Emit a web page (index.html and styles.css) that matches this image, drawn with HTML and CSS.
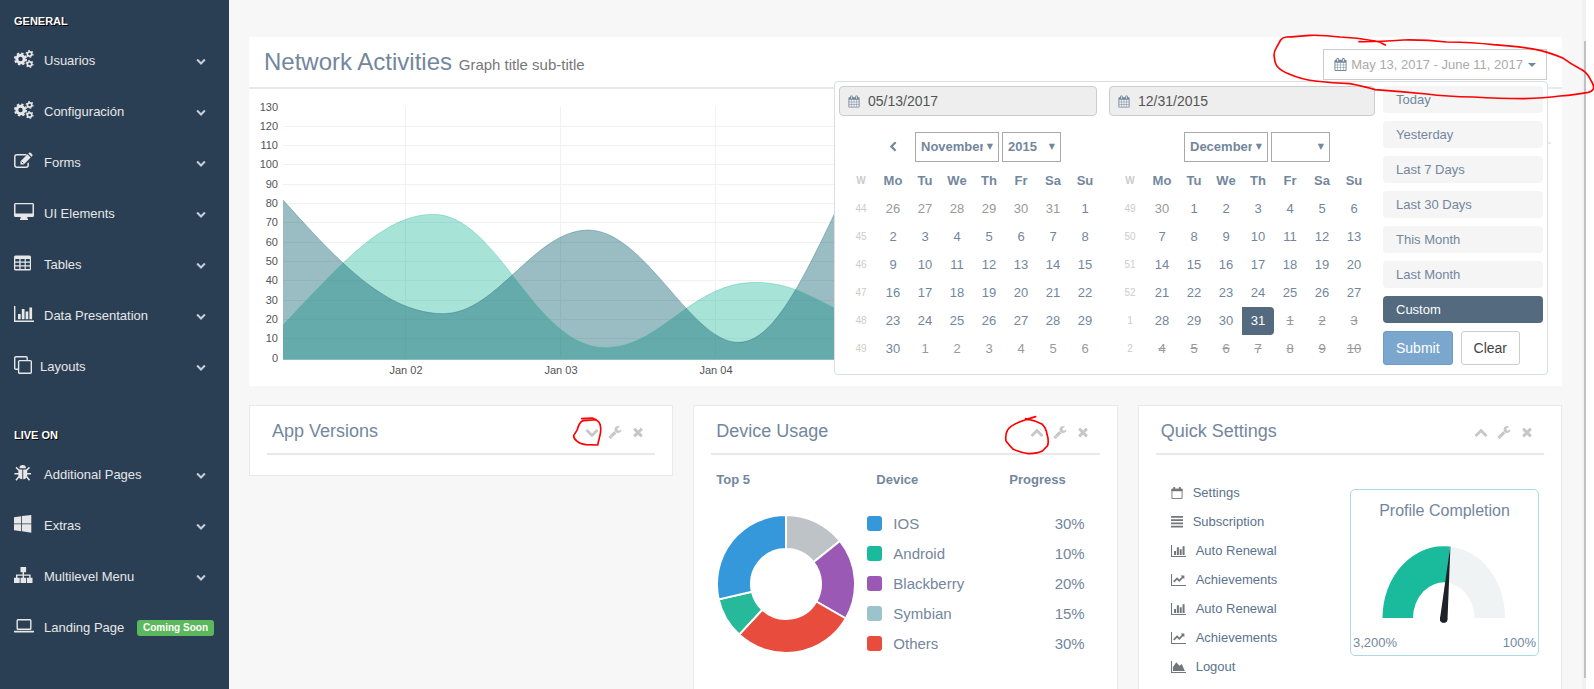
FILE: index.html
```
<!DOCTYPE html>
<html lang="en">
<head>
<meta charset="utf-8">
<title>Network Activities</title>
<link rel="stylesheet" href="styles.css">
</head>
<body>
<svg class="sprite" aria-hidden="true">
  <symbol id="i-down" viewBox="0 0 1792 1792"><path d="M1683 808l-742 741q-19 19-45 19t-45-19l-742-741q-19-19-19-45.500t19-45.500l166-165q19-19 45-19t45 19l531 531 531-531q19-19 45-19t45 19l166 165q19 19 19 45.500t-19 45.500z"/></symbol>
  <symbol id="i-up" viewBox="0 0 1792 1792"><path d="M1683 1331l-166 165q-19 19-45 19t-45-19l-531-531-531 531q-19 19-45 19t-45-19l-166-165q-19-19-19-45.500t19-45.500l742-741q19-19 45-19t45 19l742 741q19 19 19 45.500t-19 45.500z"/></symbol>
  <symbol id="i-left" viewBox="0 0 1792 1792"><path transform="rotate(-90 896 896)" d="M1683 1331l-166 165q-19 19-45 19t-45-19l-531-531-531 531q-19 19-45 19t-45-19l-166-165q-19-19-19-45.500t19-45.500l742-741q19-19 45-19t45 19l742 741q19 19 19 45.500t-19 45.500z"/></symbol>
  <symbol id="i-times" viewBox="0 0 1792 1792"><path d="M1490 1322q0 40-28 68l-136 136q-28 28-68 28t-68-28l-294-294-294 294q-28 28-68 28t-68-28l-136-136q-28-28-28-68t28-68l294-294-294-294q-28-28-28-68t28-68l136-136q28-28 68-28t68 28l294 294 294-294q28-28 68-28t68 28l136 136q28 28 28 68t-28 68l-294 294 294 294q28 28 28 68z"/></symbol>
  <symbol id="i-wrench" viewBox="0 0 1792 1792"><path d="M448 1472q0-26-19-45t-45-19-45 19-19 45 19 45 45 19 45-19 19-45zm644-420l-682 682q-37 37-90 37-52 0-91-37l-106-108q-38-36-38-90 0-53 38-91l681-681q39 98 114.500 173.500t173.500 114.500zm634-435q0 39-23 106-47 134-164.500 217.500t-258.500 83.500q-185 0-316.500-131.500t-131.500-316.500 131.500-316.500 316.500-131.500q58 0 121.500 16.500t107.500 46.500q16 11 16 28t-16 28l-293 169v224l193 107q5-3 79-48.500t135.500-81 70.500-35.500q15 0 23.500 10t8.500 25z"/></symbol>
  <symbol id="i-cal" viewBox="0 0 1792 1792"><path d="M192 1664h288v-288h-288v288zm352 0h320v-288h-320v288zm-352-352h288v-320h-288v320zm352 0h320v-320h-320v320zm-352-384h288v-288h-288v288zm736 736h320v-288h-320v288zm-384-736h320v-288h-320v288zm768 736h288v-288h-288v288zm-384-352h320v-320h-320v320zm-352-864v-288q0-13-9.500-22.500t-22.500-9.500h-64q-13 0-22.500 9.500t-9.500 22.500v288q0 13 9.500 22.500t22.500 9.500h64q13 0 22.500-9.500t9.500-22.500zm736 864h288v-320h-288v320zm-384-384h320v-288h-320v288zm384 0h288v-288h-288v288zm32-480v-288q0-13-9.500-22.500t-22.500-9.500h-64q-13 0-22.500 9.500t-9.500 22.500v288q0 13 9.500 22.500t22.500 9.500h64q13 0 22.500-9.500t9.500-22.500zm384-64v1280q0 52-38 90t-90 38h-1408q-52 0-90-38t-38-90v-1280q0-52 38-90t90-38h128v-96q0-66 47-113t113-47h64q66 0 113 47t47 113v96h384v-96q0-66 47-113t113-47h64q66 0 113 47t47 113v96h128q52 0 90 38t38 90z"/></symbol>
  <symbol id="i-cogs" viewBox="0 0 20 18"><g fill="none" stroke="currentColor"><circle cx="6.500" cy="9" r="3.700" stroke-width="3"/><circle cx="6.500" cy="9" r="5.600" stroke-width="1.900" stroke-dasharray="2.400 2"/><circle cx="15.600" cy="4" r="2.200" stroke-width="1.700"/><circle cx="15.600" cy="4" r="3.400" stroke-width="1.200" stroke-dasharray="1.560 2"/><circle cx="15.600" cy="14" r="2.200" stroke-width="1.700"/><circle cx="15.600" cy="14" r="3.400" stroke-width="1.200" stroke-dasharray="1.560 2"/></g></symbol>
  <symbol id="i-edit" viewBox="0 0 20 18"><path fill="none" stroke="currentColor" stroke-width="1.500" d="M12.500 2.700H3Q.8 2.700.8 5v8q0 2.300 2.200 2.300h9q2.200 0 2.200-2.300v-2.200"/><path d="M6.500 12.500V9.300l7-7 3.200 3.200-7 7zM14.300 1.600l.8-.8q.8-.7 1.600 0l1.600 1.600q.7.800 0 1.600l-.8.8z"/><path d="M7.600 9.600l1.800 1.800" stroke="#2a3f54" stroke-width=".9"/></symbol>
  <symbol id="i-desktop" viewBox="0 0 20 18"><path fill-rule="evenodd" d="M1.500 0h17Q20 0 20 1.500v11q0 1.500-1.500 1.500h-5.300q0 1.500.8 2.200v.8H6v-.8q.8-.7.800-2.200H1.500Q0 14 0 12.500v-11Q0 0 1.500 0zm0 1.300v9.200h17V1.300z"/></symbol>
  <symbol id="i-table" viewBox="0 0 20 18"><path fill-rule="evenodd" d="M1.500 1.500h14q1.500 0 1.500 1.500v12q0 1.500-1.500 1.500h-14Q0 16.500 0 15V3q0-1.500 1.500-1.500zM1.300 5v2.500h4V5zm5.300 0v2.500h4V5zm5.200 0v2.500h4V5zM1.300 8.700v2.600h4V8.700zm5.300 0v2.600h4V8.700zm5.200 0v2.600h4V8.700zM1.300 12.500V15h4v-2.500zm5.300 0V15h4v-2.500zm5.200 0V15h4v-2.500z"/></symbol>
  <symbol id="i-bars" viewBox="0 0 20 16"><path d="M0 0h1.400v14.600H20V16H0zM4 8h2.700v5.300H4zM7.800 3h2.700v10.300H7.800zM11.600 5.500h2.700v7.800h-2.700zM15.400 1.500h2.700v11.800h-2.700z"/></symbol>
  <symbol id="i-line" viewBox="0 0 20 16"><path d="M0 0h1.400v14.600H20V16H0zM12.800 2h5v5l-1.600-1.600-5.100 5.100-3-3-3.700 3.700-1.600-1.600 5.300-5.300 3 3 3.400-3.500z"/></symbol>
  <symbol id="i-area" viewBox="0 0 20 16"><path d="M0 0h1.400v14.600H20V16H0zM2.600 13.400V8L7 1.800l4.400 4.400 3-2.200 4 9.400z"/></symbol>
  <symbol id="i-clone" viewBox="0 0 18 18"><g fill="none" stroke="currentColor" stroke-width="1.400"><rect x="4.600" y="4.600" width="12.700" height="12.700" rx="1"/><path d="M4.600 13.200H2Q.7 13.200.7 12V2Q.7.7 2 .7h10q1.200 0 1.200 1.300v2.600"/></g></symbol>
  <symbol id="i-bug" viewBox="0 0 20 18"><path d="M5.400 4.300Q5.600 1 8.700 1T12 4.300zM4.300 5.400h4v9.800q-3.600-.3-4-3.800zM9.200 5.400h4v6q-.4 3.500-4 3.800z"/><path fill="none" stroke="currentColor" stroke-width="1.500" d="M5 6.200L2 3.400M12.500 6.200l3-2.800M5 9.800H.4M12.500 9.800H17M5 12.500l-3 3.800M12.500 12.500l3 3.800"/></symbol>
  <symbol id="i-windows" viewBox="0 0 20 18"><path d="M0 2.200l7.200-1v7.200H0zM8 1.100L17.300 0v8.400H8zM0 9.200h7.200v7L0 15.200zM8 9.200h9.300v8.600L8 16.300z"/></symbol>
  <symbol id="i-tree" viewBox="0 0 20 18"><path d="M6.500 1h5.600v5.200h-2.100v2.200h6.600v3.400h1.900V17h-5.600v-5.200h2.300V9.800H10v2h2.100V17H6.500v-5.200h2.100v-2H3.400v2h2.300V17H0v-5.200h2V8.400h6.600V6.200H6.500z"/></symbol>
  <symbol id="i-laptop" viewBox="0 0 20 18"><path fill-rule="evenodd" d="M4 2h12q1.500 0 1.500 1.500v8Q17.500 13 16 13H4q-1.500 0-1.500-1.500v-8Q2.500 2 4 2zm-.1 1.400v8.200h12.200V3.400zM0 13.800h20V15q0 .6-1.200.6H1.200Q0 15.600 0 15z"/></symbol>
  <symbol id="i-calo" viewBox="0 0 12 13"><path fill="none" stroke="currentColor" d="M.5 2.500h11v10H.5z"/><path d="M0 2h12v2.500H0zM2 0h2v3H2zM8 0h2v3H8z"/></symbol>
  <symbol id="i-list" viewBox="0 0 11 11"><path d="M0 0h11v1.500H0zM0 3h11v1.500H0zM0 6h11v1.500H0zM0 9h11v1.500H0z"/></symbol>
</svg>

<div class="page">
  <nav class="sidebar">
    <h3>GENERAL</h3>
    <ul class="menu">
      <li><a href="#"><svg class="mi"><use href="#i-cogs"/></svg>Usuarios<svg class="chev"><use href="#i-down"/></svg></a></li>
      <li><a href="#"><svg class="mi"><use href="#i-cogs"/></svg>Configuración<svg class="chev"><use href="#i-down"/></svg></a></li>
      <li><a href="#"><svg class="mi"><use href="#i-edit"/></svg>Forms<svg class="chev"><use href="#i-down"/></svg></a></li>
      <li><a href="#"><svg class="mi"><use href="#i-desktop"/></svg>UI Elements<svg class="chev"><use href="#i-down"/></svg></a></li>
      <li><a href="#"><svg class="mi"><use href="#i-table"/></svg>Tables<svg class="chev"><use href="#i-down"/></svg></a></li>
      <li><a href="#"><svg class="mi"><use href="#i-bars"/></svg>Data Presentation<svg class="chev"><use href="#i-down"/></svg></a></li>
      <li><a href="#"><svg class="mi narrow"><use href="#i-clone"/></svg>Layouts<svg class="chev"><use href="#i-down"/></svg></a></li>
    </ul>
    <h3>LIVE ON</h3>
    <ul class="menu">
      <li><a href="#"><svg class="mi"><use href="#i-bug"/></svg>Additional Pages<svg class="chev"><use href="#i-down"/></svg></a></li>
      <li><a href="#"><svg class="mi"><use href="#i-windows"/></svg>Extras<svg class="chev"><use href="#i-down"/></svg></a></li>
      <li><a href="#"><svg class="mi"><use href="#i-tree"/></svg>Multilevel Menu<svg class="chev"><use href="#i-down"/></svg></a></li>
      <li><a href="#"><svg class="mi"><use href="#i-laptop"/></svg>Landing Page<span class="badge">Coming Soon</span></a></li>
    </ul>
  </nav>

  <main class="content">
    <section class="graph">
      <header class="graph-head">
        <h2>Network Activities <small>Graph title sub-title</small></h2>
        <div class="picker">
          <button type="button" class="picker-btn"><svg class="cal"><use href="#i-cal"/></svg>May 13, 2017 - June 11, 2017<span class="caret"></span></button>
          <div class="dropdown">
            <div class="calendar first">
              <label class="date"><svg class="cal"><use href="#i-cal"/></svg><input type="text" value="05/13/2017" aria-label="Start date"></label>
              <div class="months">
                <button type="button" class="prev" aria-label="Previous month"><svg><use href="#i-left"/></svg></button>
                <span class="sel month"><select aria-label="Start month"><option>November</option></select></span>
                <span class="sel year"><select aria-label="Start year"><option>2015</option></select></span>
              </div>
              <table class="days">
                <thead><tr><th>W</th><th>Mo</th><th>Tu</th><th>We</th><th>Th</th><th>Fr</th><th>Sa</th><th>Su</th></tr></thead>
                <tbody>
                  <tr><td>44</td><td class="off">26</td><td class="off">27</td><td class="off">28</td><td class="off">29</td><td class="off">30</td><td class="off">31</td><td>1</td></tr>
                  <tr><td>45</td><td>2</td><td>3</td><td>4</td><td>5</td><td>6</td><td>7</td><td>8</td></tr>
                  <tr><td>46</td><td>9</td><td>10</td><td>11</td><td>12</td><td>13</td><td>14</td><td>15</td></tr>
                  <tr><td>47</td><td>16</td><td>17</td><td>18</td><td>19</td><td>20</td><td>21</td><td>22</td></tr>
                  <tr><td>48</td><td>23</td><td>24</td><td>25</td><td>26</td><td>27</td><td>28</td><td>29</td></tr>
                  <tr><td>49</td><td>30</td><td class="off">1</td><td class="off">2</td><td class="off">3</td><td class="off">4</td><td class="off">5</td><td class="off">6</td></tr>
                </tbody>
              </table>
            </div>
            <div class="calendar second">
              <label class="date"><svg class="cal"><use href="#i-cal"/></svg><input type="text" value="12/31/2015" aria-label="End date"></label>
              <div class="months">
                <span class="sel month"><select aria-label="End month"><option>December</option></select></span>
                <span class="sel year"><select aria-label="End year"><option></option></select></span>
              </div>
              <table class="days">
                <thead><tr><th>W</th><th>Mo</th><th>Tu</th><th>We</th><th>Th</th><th>Fr</th><th>Sa</th><th>Su</th></tr></thead>
                <tbody>
                  <tr><td>49</td><td class="off">30</td><td>1</td><td>2</td><td>3</td><td>4</td><td>5</td><td>6</td></tr>
                  <tr><td>50</td><td>7</td><td>8</td><td>9</td><td>10</td><td>11</td><td>12</td><td>13</td></tr>
                  <tr><td>51</td><td>14</td><td>15</td><td>16</td><td>17</td><td>18</td><td>19</td><td>20</td></tr>
                  <tr><td>52</td><td>21</td><td>22</td><td>23</td><td>24</td><td>25</td><td>26</td><td>27</td></tr>
                  <tr><td>1</td><td>28</td><td>29</td><td>30</td><td class="active">31</td><td class="off gone">1</td><td class="off gone">2</td><td class="off gone">3</td></tr>
                  <tr><td>2</td><td class="off gone">4</td><td class="off gone">5</td><td class="off gone">6</td><td class="off gone">7</td><td class="off gone">8</td><td class="off gone">9</td><td class="off gone">10</td></tr>
                </tbody>
              </table>
            </div>
            <div class="ranges">
              <button type="button">Today</button>
              <button type="button">Yesterday</button>
              <button type="button">Last 7 Days</button>
              <button type="button">Last 30 Days</button>
              <button type="button">This Month</button>
              <button type="button">Last Month</button>
              <button type="button" class="current">Custom</button>
              <div class="actions"><button type="button" class="submit">Submit</button><button type="button" class="clear">Clear</button></div>
            </div>
          </div>
        </div>
      </header>
      <div class="plot">
        <svg class="plot-svg" viewBox="0 0 1313 297" preserveAspectRatio="xMinYMin meet">
          <g class="grid">
            <path d="M34 37.500H980M34 56.500H980M34 75.500H980M34 95.500H980M34 114.500H980M34 133.500H980M34 153.500H980M34 172.500H980M34 191.500H980M34 211.500H980M34 230.500H980M34 249.500H980M156.500 18V269M311.500 18V269M466.500 18V269"/>
          </g>
          <g transform="scale(.33333) translate(-27 -207)">
            <path class="green" d="M129 915C300 735 430 583 580 583C775 583 882 983 1097 983C1262 983 1355 787 1545 787C1640 787 1700 822 1783 864L1900 920V1019H129Z"/>
            <path class="blue" d="M129 540C300 730 440 881 612 881C770 881 884 630 1044 630C1215 630 1352 967 1495 967C1590 967 1670 820 1783 582L1900 340V1019H129Z"/>
            <path class="green-line" d="M129 915C300 735 430 583 580 583C775 583 882 983 1097 983C1262 983 1355 787 1545 787C1640 787 1700 822 1783 864"/>
            <path class="blue-line" d="M129 540C300 730 440 881 612 881C770 881 884 630 1044 630C1215 630 1352 967 1495 967C1590 967 1670 820 1783 582"/>
          </g>
          <g class="ylab">
            <text x="29" y="22">130</text><text x="29" y="41">120</text><text x="29" y="60">110</text><text x="29" y="79">100</text><text x="29" y="99">90</text><text x="29" y="118">80</text><text x="29" y="137">70</text><text x="29" y="157">60</text><text x="29" y="176">50</text><text x="29" y="195">40</text><text x="29" y="215">30</text><text x="29" y="234">20</text><text x="29" y="253">10</text><text x="29" y="273">0</text>
          </g>
          <g class="xlab"><text x="157" y="285">Jan 02</text><text x="312" y="285">Jan 03</text><text x="467" y="285">Jan 04</text></g>
        </svg>
        <div class="side-rule"></div>
      </div>
    </section>

    <div class="cards">
      <section class="card">
        <header><h2>App Versions</h2><div class="tools"><button type="button" aria-label="Expand"><svg><use href="#i-down"/></svg></button><button type="button" aria-label="Settings"><svg><use href="#i-wrench"/></svg></button><button type="button" aria-label="Close"><svg><use href="#i-times"/></svg></button></div></header>
      </section>

      <section class="card tall">
        <header><h2>Device Usage</h2><div class="tools"><button type="button" aria-label="Collapse"><svg><use href="#i-up"/></svg></button><button type="button" aria-label="Settings"><svg><use href="#i-wrench"/></svg></button><button type="button" aria-label="Close"><svg><use href="#i-times"/></svg></button></div></header>
        <div class="usage">
          <div class="usage-head"><b>Top 5</b><b>Device</b><b>Progress</b></div>
          <div class="usage-body">
            <svg class="donut" viewBox="-70 -70 140 140">
              <g stroke="#fff" stroke-width="2">
                <path fill="#bdc3c7" d="M0-69A69 69 0 0 1 53.900-43L27.400-21.800A35 35 0 0 0 0-35Z"/>
                <path fill="#9b59b6" d="M53.900-43A69 69 0 0 1 59.800 34.500L30.300 17.500A35 35 0 0 0 27.400-21.800Z"/>
                <path fill="#e74c3c" d="M59.800 34.500A69 69 0 0 1-46.900 50.600L-23.800 25.700A35 35 0 0 0 30.300 17.500Z"/>
                <path fill="#26b99a" d="M-46.900 50.600A69 69 0 0 1-67.300 15.400L-34.100 7.800A35 35 0 0 0-23.800 25.700Z"/>
                <path fill="#3498db" d="M-67.300 15.400A69 69 0 0 1 0-69V-35A35 35 0 0 0-34.100 7.800Z"/>
              </g>
            </svg>
            <table class="legend">
              <tr><td><i class="sq ios"></i>IOS</td><td>30%</td></tr>
              <tr><td><i class="sq android"></i>Android</td><td>10%</td></tr>
              <tr><td><i class="sq blackberry"></i>Blackberry</td><td>20%</td></tr>
              <tr><td><i class="sq symbian"></i>Symbian</td><td>15%</td></tr>
              <tr><td><i class="sq others"></i>Others</td><td>30%</td></tr>
            </table>
          </div>
        </div>
      </section>

      <section class="card tall">
        <header><h2>Quick Settings</h2><div class="tools"><button type="button" aria-label="Collapse"><svg><use href="#i-up"/></svg></button><button type="button" aria-label="Settings"><svg><use href="#i-wrench"/></svg></button><button type="button" aria-label="Close"><svg><use href="#i-times"/></svg></button></div></header>
        <div class="quick">
          <ul class="quick-list">
            <li><a href="#"><svg class="s"><use href="#i-calo"/></svg>Settings</a></li>
            <li><a href="#"><svg class="s"><use href="#i-list"/></svg>Subscription</a></li>
            <li><a href="#"><svg class="w"><use href="#i-bars"/></svg>Auto Renewal</a></li>
            <li><a href="#"><svg class="w"><use href="#i-line"/></svg>Achievements</a></li>
            <li><a href="#"><svg class="w"><use href="#i-bars"/></svg>Auto Renewal</a></li>
            <li><a href="#"><svg class="w"><use href="#i-line"/></svg>Achievements</a></li>
            <li><a href="#"><svg class="w"><use href="#i-area"/></svg>Logout</a></li>
          </ul>
          <div class="gauge">
            <h4>Profile Completion</h4>
            <svg viewBox="0 0 130 80">
              <path fill="#f0f3f4" d="M70 2.500A61 71 0 0 1 125 74H94.500A31 36 0 0 0 64 38.500Z"/>
              <path fill="#1abb9c" d="M2.500 74A61.500 71.500 0 0 1 70 2.500L67 38.500A31 36 0 0 0 33 74Z"/>
              <path fill="#1d212a" d="M70.500 1L67.500 75A3.700 4 0 0 1 60 74.500Z"/>
              <circle fill="#1d212a" cx="63.700" cy="75" r="3.600"/>
            </svg>
            <div class="scale"><span>3,200%</span><span>100%</span></div>
          </div>
        </div>
      </section>
    </div>
  </main>
  <div class="scroll"><div class="thumb"></div></div>
</div>

<svg class="marks" viewBox="0 0 1594 689" width="1594" height="689" aria-hidden="true">
  <path transform="translate(1260 20) scale(.33333)" d="M376 75Q362 66 345 63Q290 53 240 51Q190 45 150 46Q110 50 80 51Q68 52 62 60L48 85Q40 98 43 112Q44 128 50 137Q62 152 85 161Q125 178 165 183Q220 189 270 191Q320 201 345 209Q420 214 500 222Q560 230 640 231Q720 236 790 236Q850 235 900 228Q950 224 985 217Q1001 213 1001 200Q998 188 990 176Q980 155 960 146Q930 130 910 115Q880 101 840 91Q790 80 700 74Q640 67 560 66Q500 59 430 60Q350 66 297 65"/>
  <path transform="translate(240 395) scale(.33333)" d="M1025 71L1057 69Q1078 78 1080 88Q1085 105 1079 125L1073 150L1038 149Q1020 146 1012 139Q1001 132 1001 122L1012 104Q1018 80 1030 77L1068 74"/>
  <path transform="translate(685 395) scale(.33333)" d="M1052 65L1022 74Q975 90 968 105Q960 118 963 138Q972 150 985 163Q1010 174 1030 176Q1060 175 1072 168L1088 152Q1092 135 1086 118Q1084 100 1072 88Q1050 76 1022 71"/>
</svg>
</body>
</html>
```

FILE: styles.css
```
* { box-sizing: border-box; }
html, body { height: 100%; }
body {
  margin: 0;
  overflow: hidden;
  position: relative;
  background: #fff;
  color: #73879c;
  font: 13px/18px "Liberation Sans", Arial, sans-serif;
}
h2, h3, h4, ul { margin: 0; padding: 0; font-weight: normal; }
ul { list-style: none; }
a { color: inherit; text-decoration: none; }
button, input, select { font: inherit; color: inherit; margin: 0; }
button { background: none; border: 0; padding: 0; }
svg { fill: currentColor; flex: none; }
.sprite { position: absolute; width: 0; height: 0; }

.page { display: flex; height: 100vh; padding-right: 8px; overflow: hidden; }

/* sidebar */
.sidebar { flex: none; width: 229px; background: #2a3f54; color: #e7e7e7; padding-top: 13px; }
.sidebar h3 {
  padding-left: 14px;
  margin-bottom: 6px;
  font-size: 11px;
  line-height: 16px;
  font-weight: bold;
  color: #fff;
  text-shadow: 1px 1px #000;
}
.menu + h3 { margin-top: 35px; }
.menu a { display: flex; align-items: center; height: 51px; padding: 0 15px 0 14px; }
.mi { width: 20px; height: 18px; margin: 0 10px 4px 0; }
.mi.narrow { width: 18px; margin-right: 8px; }
.chev { width: 10px; height: 10px; margin: 0 8px 0 auto; fill: #c4cfda; }
.badge {
  margin-left: auto;
  padding: 0 6px;
  border-radius: 3px;
  background: #5cb85c;
  color: #fff;
  font-size: 10px;
  line-height: 16px;
  font-weight: bold;
}

/* content */
.content { flex: 1; min-width: 0; padding: 37px 20px 0; background: #f7f7f7; }
.graph { background: #fff; }
.graph-head {
  display: flex;
  justify-content: space-between;
  height: 52px;
  padding: 12px 15px 0;
  border-bottom: 2px solid #e6e9ed;
}
.graph-head h2 { font-size: 24px; line-height: 26px; white-space: nowrap; }
.graph-head small { font-size: 15px; color: #777; }
.picker { position: relative; }
.picker-btn {
  display: flex;
  align-items: center;
  height: 31px;
  padding: 0 10px;
  border: 1px solid #ccc;
  background: #fff;
  color: #aaa;
  white-space: nowrap;
}
.cal { width: 13px; height: 13px; margin-right: 4px; fill: #73879c; }
.caret { margin-left: 5px; border: 4px solid transparent; border-top-color: #73879c; border-bottom: 0; }
.dropdown {
  position: absolute;
  z-index: 2;
  top: 32px;
  right: -1px;
  display: flex;
  width: 714px;
  padding: 4px;
  border: 1px solid #d9dee4;
  border-radius: 4px;
  background: #fff;
}
.calendar { flex: none; width: 270px; }
.calendar.second { width: 274px; }
.date {
  display: flex;
  align-items: center;
  height: 30px;
  padding: 0 8px;
  margin-right: 12px;
  border: 1px solid #ccc;
  border-radius: 4px;
  background: #eee;
}
.second .date { margin-right: 8px; }
.date .cal { margin-right: 8px; width: 12px; }
.date input { width: 100%; min-width: 0; padding: 0; border: 0; background: none; outline: 0; font-size: 14px; color: #555; }
.months { display: flex; align-items: center; gap: 3px; height: 61px; padding-left: 34px; }
.second .months { padding-left: 75px; }
.prev { width: 39px; height: 30px; }
.prev svg { display: block; width: 11px; height: 11px; margin: 0 auto; }
.sel { position: relative; }
.sel.month { width: 84px; }
.sel.year { width: 59px; }
.sel select {
  display: block;
  appearance: none;
  width: 100%;
  height: 30px;
  padding: 0 15px 0 5px;
  border: 1px solid #a9a9a9;
  border-radius: 0;
  background: #fff;
  font-weight: bold;
}
.sel::after { content: "▼"; position: absolute; right: 6px; top: 6px; font: 8px/18px "DejaVu Sans", sans-serif; pointer-events: none; }
.days { margin: -10px 0 7px 6px; border-collapse: collapse; table-layout: fixed; width: 256px; }
.second .days { margin-left: 5px; }
.days th, .days td { width: 32px; height: 28px; padding: 0; text-align: center; }
.days tr > :first-child { font-size: 10px; color: #ccc; }
.days .off { color: #999; }
.days .gone { text-decoration: line-through; }
.days .active { background: #536a7f; color: #fff; border-radius: 0 4px 4px 0; }
.ranges { flex: 1; display: flex; flex-direction: column; gap: 8px; }
.ranges > button { height: 27px; padding: 0 13px; border-radius: 4px; background: #f5f5f5; text-align: left; }
.ranges > .current { background: #536a7f; color: #fff; }
.actions { display: flex; gap: 8px; font-size: 14px; }
.actions button { height: 34px; padding: 0 12px; border-radius: 3px; border: 1px solid #ccc; color: #444; }
.actions .submit { background: #7ba7cf; border-color: #6d9cc7; color: #fff; }

.plot { position: relative; height: 297px; overflow: hidden; }
.plot-svg { display: block; width: 1313px; height: 297px; }
.side-rule { position: absolute; top: 53px; right: 11px; width: 300px; height: 2px; background: #e6e9ed; }
.grid { fill: none; stroke: #f1f1f1; }
.green { fill: rgba(38, 185, 154, .4); }
.blue { fill: rgba(3, 88, 106, .4); }
.green-line, .blue-line { fill: none; stroke-width: 3; }
.green-line { stroke: rgba(38, 185, 154, .3); }
.blue-line { stroke: rgba(3, 88, 106, .3); }
.ylab, .xlab { font-size: 11px; fill: #545454; text-anchor: middle; }
.ylab { text-anchor: end; }

/* cards */
.cards { display: grid; grid-template-columns: repeat(3, 1fr); gap: 20px; margin-top: 19px; align-items: start; }
.card { min-height: 71px; padding: 10px 17px; background: #fff; border: 1px solid #e6e9ed; }
.card.tall { min-height: 360px; }
.card header {
  display: flex;
  justify-content: space-between;
  align-items: center;
  height: 39px;
  padding: 0 10px 7px 5px;
  border-bottom: 2px solid #e6e9ed;
}
.card h2 { font-size: 18px; line-height: 24px; }
.tools { display: flex; gap: 9px; padding-top: 2px; color: #c5c7cb; }
.tools svg { display: block; width: 14px; height: 14px; }

.usage { padding: 16px 5px 0; }
.usage-head { display: grid; grid-template-columns: 160px 133px 1fr; }
.usage-body { display: flex; gap: 11px; padding-top: 20px; }
.donut { width: 140px; height: 140px; margin-top: 5px; }
.legend { flex: 1; margin-right: 10px; border-collapse: collapse; font-size: 15px; }
.legend td { height: 30px; padding: 0; }
.legend td:last-child { text-align: right; }
.sq { display: inline-block; width: 15px; height: 15px; margin-right: 11px; border-radius: 3px; vertical-align: -2px; }
.ios { background: #3498db; }
.android { background: #1abb9c; }
.blackberry { background: #9b59b6; }
.symbian { background: #9cc2cb; }
.others { background: #e74c3c; }

.quick { display: flex; justify-content: space-between; padding: 23px 5px 0 15px; }
.quick-list a { display: flex; align-items: center; height: 29px; color: #5a738e; }
.quick-list svg { height: 12px; margin-right: 10px; color: #73777b; }
.quick-list .s { width: 12px; }
.quick-list .w { width: 15px; }
.gauge { width: 189px; margin-top: 11px; padding: 11px 2px 3px; border: 1px solid #add8e6; border-radius: 5px; text-align: center; align-self: flex-start; }
.gauge h4 { font-size: 16px; line-height: 20px; }
.gauge svg { display: block; width: 130px; height: 80px; margin: 23px auto 10px; }
.scale { display: flex; justify-content: space-between; }

/* thin scroll indicator */
.scroll { flex: none; width: 4px; padding: 41px 0 11px 2px; background: #f1f1f1; }
.thumb { height: 100%; background: #c1c1c1; }

.marks { position: absolute; top: 0; left: 0; z-index: 5; pointer-events: none; }
.marks path { fill: none; stroke: #f00; stroke-width: 5; stroke-linejoin: round; stroke-linecap: round; }
```
